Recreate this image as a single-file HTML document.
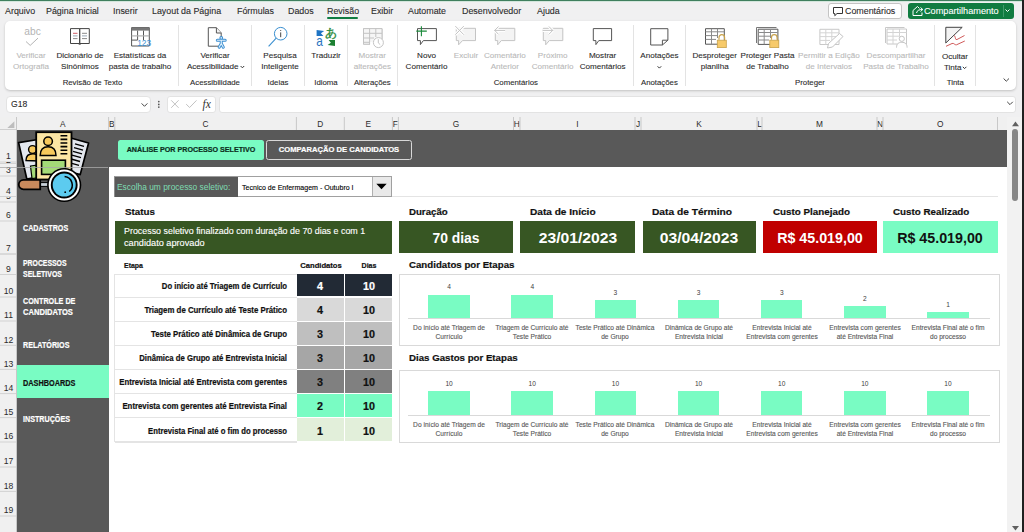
<!DOCTYPE html>
<html><head><meta charset="utf-8">
<style>
*{margin:0;padding:0;box-sizing:border-box}
html,body{width:1024px;height:532px;overflow:hidden;background:#f0f0f1;font-family:"Liberation Sans",sans-serif;color:#242424}
.a{position:absolute}
.t{position:absolute;white-space:nowrap;line-height:1}
</style></head><body>
<div class="a" style="left:0;top:0;width:1024px;height:1px;background:#3f7f5e"></div><div class="a" style="left:0;top:1px;width:1024px;height:1px;background:#d3e6dc"></div>

<div class="t" style="top:7px;font-size:8.90px;color:#2b2b2b;-webkit-text-stroke:0.1px #2b2b2b;left:5.00px;">Arquivo</div>
<div class="t" style="top:7px;font-size:8.90px;color:#2b2b2b;-webkit-text-stroke:0.1px #2b2b2b;left:46.00px;">Página Inicial</div>
<div class="t" style="top:7px;font-size:8.90px;color:#2b2b2b;-webkit-text-stroke:0.1px #2b2b2b;left:113.00px;">Inserir</div>
<div class="t" style="top:7px;font-size:8.90px;color:#2b2b2b;-webkit-text-stroke:0.1px #2b2b2b;left:152.00px;">Layout da Página</div>
<div class="t" style="top:7px;font-size:8.90px;color:#2b2b2b;-webkit-text-stroke:0.1px #2b2b2b;left:237.00px;">Fórmulas</div>
<div class="t" style="top:7px;font-size:8.90px;color:#2b2b2b;-webkit-text-stroke:0.1px #2b2b2b;left:288.00px;">Dados</div>
<div class="t" style="top:7px;font-size:8.90px;color:#2b2b2b;-webkit-text-stroke:0.1px #2b2b2b;left:327.00px;">Revisão</div>
<div class="t" style="top:7px;font-size:8.90px;color:#2b2b2b;-webkit-text-stroke:0.1px #2b2b2b;left:371.00px;">Exibir</div>
<div class="t" style="top:7px;font-size:8.90px;color:#2b2b2b;-webkit-text-stroke:0.1px #2b2b2b;left:408.00px;">Automate</div>
<div class="t" style="top:7px;font-size:8.90px;color:#2b2b2b;-webkit-text-stroke:0.1px #2b2b2b;left:462.00px;">Desenvolvedor</div>
<div class="t" style="top:7px;font-size:8.90px;color:#2b2b2b;-webkit-text-stroke:0.1px #2b2b2b;left:537.00px;">Ajuda</div>
<div class="a" style="left:327px;top:17px;width:31px;height:2px;background:#107c41;border-radius:1px"></div>
<div class="a" style="left:828px;top:3px;width:74px;height:16px;background:#fff;border:1px solid #c4c4c4;border-radius:3px"></div>
<svg class="a" style="left:832px;top:6px" width="12" height="11"><path d="M1.5 1.5H10.5V7.5H5L2.8 9.7V7.5H1.5Z" fill="none" stroke="#333" stroke-width="1"/></svg>
<div class="t" style="top:7px;font-size:8.90px;color:#2b2b2b;-webkit-text-stroke:0.1px #2b2b2b;left:845.00px;">Comentários</div>
<div class="a" style="left:907.5px;top:3px;width:106px;height:16px;background:#107c41;border-radius:3px"></div>
<svg class="a" style="left:911px;top:5px" width="14" height="12"><path d="M2 5.5V10.5H11V7.5M2 5.5L6.5 1.5L8.5 3.5M5.5 8C6 5.5 8 4.5 11.5 4.5M9.5 2.5L11.8 4.5L9.5 6.5" fill="none" stroke="#fff" stroke-width="1"/></svg>
<div class="t" style="top:7px;font-size:8.90px;color:#fff;-webkit-text-stroke:0.1px #fff;left:923.60px;transform:scaleX(1.030);transform-origin:0 0;">Compartilhamento</div>
<div class="a" style="left:1002.5px;top:5px;width:1px;height:12px;background:#3f9a6a"></div>
<svg class="a" style="left:1004px;top:8px" width="8" height="6"><path d="M1.5 1.5L3.5 3.5L5.5 1.5" fill="none" stroke="#fff" stroke-width="1"/></svg>
<div class="a" style="left:5px;top:21px;width:1011px;height:68.6px;background:#fff;border-radius:5px;box-shadow:0 1px 2.5px rgba(0,0,0,.2)"></div>
<!-- RIBBON ICONS -->
<svg class="a" style="left:0;top:0;z-index:2" width="1024" height="115" viewBox="0 0 1024 115" fill="none" stroke-linecap="butt">
 <!-- separators -->
 <g stroke="#e3e3e3" stroke-width="1">
  <path d="M178.5 25V86M251.5 25V86M304.5 25V86M347.5 25V86M397.5 25V86M633.5 25V86M685.5 25V86M934.5 25V86M975.5 25V86"/>
 </g>
 <!-- abc check -->
 <text x="24.3" y="35.3" font-family="Liberation Sans" font-size="10.2" fill="#b4b4b4" stroke="none">abc</text>
 <path d="M26 41.5L30.2 45.4L38 38.1" stroke="#b4b4b4" stroke-width="1"/>
 <!-- book -->
 <path d="M70.5 28.6H79.7V43.5H70.5Z M79.7 28.6H89.3V43.5H79.7Z" stroke="#444" stroke-width="1" fill="#fff"/>
 <path d="M78.7 43.5H80.7V44.7H78.7Z" fill="#444"/>
 <path d="M73 33.3H77.5" stroke="#d0606a" stroke-width="1"/>
 <path d="M73 35.9H77.5M82 35.9H87" stroke="#9aa6b4" stroke-width="1"/>
 <path d="M73 38.6H77.5M82 33.3H87M82 38.6H87" stroke="#8a8a8a" stroke-width="1"/>
 <!-- table 123 -->
 <path d="M131.6 27.6H149.3V46H131.6Z" stroke="#555" stroke-width="1" fill="#fff"/>
 <path d="M131.6 27.6H149.3V30.6H131.6Z" fill="#777"/>
 <path d="M137.6 30.6V40M143.5 30.6V40M131.6 40.1H137.6" stroke="#555" stroke-width="1"/>
 <path d="M131.6 35.9H149.3" stroke="#b0b0b0" stroke-width="1.2"/>
 <text x="137.2" y="46.2" font-family="Liberation Sans" font-size="8.4" fill="#3a8fd0" stroke="none">123</text>
 <!-- accessibility doc -->
 <path d="M208.3 27.7H216.4L221.2 32.9V46.2H208.3Z" stroke="#555" stroke-width="1" fill="#fff"/>
 <path d="M216.4 27.7V33H221.2" stroke="#555" stroke-width="1" fill="#f4f4f4"/>
 <g stroke-linecap="round" stroke-linejoin="round">
 <path d="M217.3 40.2L225.2 40.2M221.25 40.2V43.8M221.25 43.5L219.2 47.2M221.25 43.5L223.3 47.2" stroke="#3d8fd1" stroke-width="3"/>
 <circle cx="221.25" cy="37.9" r="1.9" fill="#3d8fd1"/>
 <path d="M217.3 40.2L225.2 40.2M221.25 40.2V43.8M221.25 43.5L219.2 47.2M221.25 43.5L223.3 47.2" stroke="#dff0fb" stroke-width="1.1"/>
 <circle cx="221.25" cy="37.9" r=".8" fill="#dff0fb"/>
 </g>
 <!-- search -->
 <circle cx="280.7" cy="33.7" r="6.3" stroke="#3a8fd0" stroke-width="1"/>
 <path d="M276.2 38.2L268.6 46.3" stroke="#3a8fd0" stroke-width="1.1"/>
 <path d="M280.7 32.4V37.2" stroke="#444" stroke-width="1"/>
 <circle cx="280.7" cy="30.5" r=".6" fill="#444" stroke="none"/>
 <!-- translate -->
 <path d="M316.6 30L324.2 30.9L320.9 33.2L323.4 35.9L316.6 36.1Z" fill="#1f74c4"/>
 <text x="0" y="0" transform="translate(316.2 46.2) scale(0.8 1)" font-family="Liberation Sans" font-size="14.8" fill="#2a74c0" stroke="none">a</text>
 <text x="325.2" y="37.2" font-family="Liberation Sans" font-size="11.8" fill="#2a8a3a" stroke="#2a8a3a" stroke-width=".35">あ</text>
 <path d="M335 46.1L327.6 45L330.9 42.8L328.6 40.1L335 40Z" fill="#1d8032"/>
 <!-- mostrar alteracoes gray -->
 <path d="M363.5 28.6H382V39.5M363.5 28.6V44.2H370" stroke="#c4c4c4" stroke-width="1" fill="none"/>
 <path d="M363.5 28.6H382V42H370V44.2H363.5Z" fill="#f6f6f6" stroke="none"/>
 <path d="M363.5 28.6H382V39M363.5 28.6V44.2H370M363.5 33.3H382M363.5 38H374M363.5 42.3H370M369.6 28.6V44.2M375.8 28.6V37" stroke="#c4c4c4" stroke-width="1" fill="none"/>
 <circle cx="378.4" cy="42.6" r="5" stroke="#c4c4c4" stroke-width="1" fill="#fff"/>
 <path d="M378.3 39.2V42.9L380.2 44.6" stroke="#c4c4c4" stroke-width="1" fill="none"/>
 <!-- novo comentario -->
 <path d="M417.5 28.6H436.4V40.6H423.3L420.4 44.6V40.6H417.5Z" stroke="#555" stroke-width="1" fill="#fff"/>
 <path d="M421.4 26.2V36.3M416.3 31.1H426.8" stroke="#1a8a3a" stroke-width="1.1"/>
 <!-- excluir gray -->
 <path d="M456.3 28.3H475.5V40.6H462.5L458.6 44.8V40.6H456.3Z" stroke="#c4c4c4" stroke-width="1" fill="#f4f4f4"/>
 <path d="M455.3 26.1L463.8 34.7M463.8 26.1L455.3 34.7" stroke="#fff" stroke-width="3"/>
 <path d="M455.3 26.1L463.8 34.7M463.8 26.1L455.3 34.7" stroke="#c4c4c4" stroke-width="1"/>
 <!-- anterior gray -->
 <path d="M495.3 28.3H514.8V40.6H501.3L497.7 44.8V40.6H495.3Z" stroke="#c4c4c4" stroke-width="1" fill="#f4f4f4"/>
 <path d="M494.5 30.4H505.1M494.7 30.4L498.5 26.5M494.7 30.4L498.5 34.3" stroke="#fff" stroke-width="3"/>
 <path d="M494.5 30.4H505.1M494.7 30.4L498.5 26.5M494.7 30.4L498.5 34.3" stroke="#c4c4c4" stroke-width="1" fill="none"/>
 <!-- proximo gray -->
 <path d="M543.3 28.3H562.8V40.6H549.3L545.7 44.8V40.6H543.3Z" stroke="#c4c4c4" stroke-width="1" fill="#f4f4f4"/>
 <path d="M542.6 30.4H552.9M552.7 30.4L548.9 26.5M552.7 30.4L548.9 34.3" stroke="#fff" stroke-width="3"/>
 <path d="M542.6 30.4H552.9M552.7 30.4L548.9 26.5M552.7 30.4L548.9 34.3" stroke="#c4c4c4" stroke-width="1" fill="none"/>
 <!-- mostrar comentarios -->
 <path d="M593.3 28.6H611.6V40.6H598.8L595.9 44.6V40.6H593.3Z" stroke="#555" stroke-width="1" fill="#fff"/>
 <!-- anotacoes -->
 <path d="M650.7 28.7H667.9V40.2L662.4 45H650.7Z" stroke="#555" stroke-width="1" fill="#fff"/>
 <path d="M667.9 40.2H662.4V45" stroke="#555" stroke-width="1" fill="none"/>
 <!-- desproteger -->
 <path d="M705.5 28.7H724.3V44.2H705.5Z" stroke="#555" stroke-width="1" fill="#fff"/>
 <path d="M705.5 31.8H724.3M705.5 35.6H718M705.5 39.4H716M711.5 28.7V44.2M717.5 28.7V38" stroke="#8a8a8a" stroke-width="1"/>
 <path d="M719 39.8V37.5A2.8 2.8 0 0 1 724.6 37.5V39.8" stroke="#c9a24a" stroke-width="1.2"/>
 <rect x="717.3" y="40.2" width="9" height="7.4" fill="#f7ca6a" stroke="#c9a24a" stroke-width=".8"/>
 <!-- proteger pasta -->
 <path d="M756.5 27.5H776.5M756.5 27.5V43" stroke="#777" stroke-width="1"/>
 <path d="M758.2 29.2H777.9V44.4H758.2Z" stroke="#555" stroke-width="1" fill="#fff"/>
 <path d="M758.2 32.5H777.9M758.2 36.2H771M758.2 40H769M764.2 29.2V44.4M770.5 29.2V38" stroke="#8a8a8a" stroke-width="1"/>
 <path d="M771.5 39.8V37.5A2.8 2.8 0 0 1 777.1 37.5V39.8" stroke="#c9a24a" stroke-width="1.2"/>
 <rect x="769.8" y="40.2" width="9" height="7.4" fill="#f7ca6a" stroke="#c9a24a" stroke-width=".8"/>
 <!-- permitir gray -->
 <path d="M819.9 29.3H839V44.5H819.9Z" stroke="#c8c8c8" stroke-width="1" fill="#fff"/>
 <path d="M819.9 32.8H839M819.9 36.6H836M819.9 40.4H830M825.8 29.3V44.5M831.8 29.3V40" stroke="#d4d4d4" stroke-width="1"/>
 <path d="M839.5 33.5L843 36.5L832.5 47L827.5 48L828.5 43.5Z" stroke="#c4c4c4" stroke-width="1" fill="#fff"/>
 <!-- descompartilhar gray -->
 <path d="M885.5 27.5H904.5M885.5 27.5V43" stroke="#c8c8c8" stroke-width="1"/>
 <path d="M887 29H906.5V44H887Z" stroke="#c8c8c8" stroke-width="1" fill="#fff"/>
 <path d="M887 32.5H906.5M887 36.2H900M887 40H897M893 29V44M899.5 29V36" stroke="#d4d4d4" stroke-width="1"/>
 <circle cx="901.8" cy="38.8" r="2.6" stroke="#c4c4c4" stroke-width="1" fill="#fff"/>
 <path d="M896.5 47.6C896.5 43.8 898.6 42.3 901.8 42.3C905 42.3 907.1 43.8 907.1 47.6" stroke="#c4c4c4" stroke-width="1" fill="#fff"/>
 <!-- tinta -->
 <path d="M945.8 27.3H962.2L945.8 43Z" stroke="#444" stroke-width="1" fill="#f3f3f3"/>
 <path d="M954.5 35.5C956 38.5 955 40 957 39.5L964.5 35.5" stroke="#d05a5a" stroke-width="1"/>
 <path d="M946 46.3L952 43.5C954 42.6 954.5 45.3 956.5 44.8L964.8 41" stroke="#d05a5a" stroke-width="1"/>
 <!-- chevrons -->
 <path d="M1003.6 78.5L1006.3 81.2L1009 78.5" stroke="#444" stroke-width="1"/>
 <path d="M1007.2 101.8L1010 104.6L1012.8 101.8" stroke="#444" stroke-width="1"/>
 <path d="M141.6 103.4L144.5 106.3L147.4 103.4" stroke="#444" stroke-width="1"/>
</svg>
<div class="t" style="top:52px;font-size:8.10px;color:#b9b9b9;-webkit-text-stroke:0.1px #b9b9b9;left:-19.00px;width:100px;text-align:center;">Verificar</div>
<div class="t" style="top:63px;font-size:8.10px;color:#b9b9b9;-webkit-text-stroke:0.1px #b9b9b9;left:-19.00px;width:100px;text-align:center;">Ortografia</div>
<div class="t" style="top:52px;font-size:8.10px;color:#2b2b2b;-webkit-text-stroke:0.1px #2b2b2b;left:30.00px;width:100px;text-align:center;">Dicionário de</div>
<div class="t" style="top:63px;font-size:8.10px;color:#2b2b2b;-webkit-text-stroke:0.1px #2b2b2b;left:30.00px;width:100px;text-align:center;">Sinônimos</div>
<div class="t" style="top:52px;font-size:8.10px;color:#2b2b2b;-webkit-text-stroke:0.1px #2b2b2b;left:90.00px;width:100px;text-align:center;">Estatísticas da</div>
<div class="t" style="top:63px;font-size:8.10px;color:#2b2b2b;-webkit-text-stroke:0.1px #2b2b2b;left:90.00px;width:100px;text-align:center;">pasta de trabalho</div>
<div class="t" style="top:52px;font-size:8.10px;color:#2b2b2b;-webkit-text-stroke:0.1px #2b2b2b;left:165.00px;width:100px;text-align:center;">Verificar</div>
<div class="t" style="top:63px;font-size:8.10px;color:#2b2b2b;-webkit-text-stroke:0.1px #2b2b2b;left:165.00px;width:100px;text-align:center;">Acessibilidade&nbsp;&nbsp;</div>
<div class="t" style="top:52px;font-size:8.10px;color:#2b2b2b;-webkit-text-stroke:0.1px #2b2b2b;left:230.00px;width:100px;text-align:center;">Pesquisa</div>
<div class="t" style="top:63px;font-size:8.10px;color:#2b2b2b;-webkit-text-stroke:0.1px #2b2b2b;left:230.00px;width:100px;text-align:center;">Inteligente</div>
<div class="t" style="top:52px;font-size:8.10px;color:#2b2b2b;-webkit-text-stroke:0.1px #2b2b2b;left:276.00px;width:100px;text-align:center;">Traduzir</div>
<div class="t" style="top:52px;font-size:8.10px;color:#b9b9b9;-webkit-text-stroke:0.1px #b9b9b9;left:322.30px;width:100px;text-align:center;">Mostrar</div>
<div class="t" style="top:63px;font-size:8.10px;color:#b9b9b9;-webkit-text-stroke:0.1px #b9b9b9;left:322.30px;width:100px;text-align:center;">alterações</div>
<div class="t" style="top:52px;font-size:8.10px;color:#2b2b2b;-webkit-text-stroke:0.1px #2b2b2b;left:376.50px;width:100px;text-align:center;">Novo</div>
<div class="t" style="top:63px;font-size:8.10px;color:#2b2b2b;-webkit-text-stroke:0.1px #2b2b2b;left:376.50px;width:100px;text-align:center;">Comentário</div>
<div class="t" style="top:52px;font-size:8.10px;color:#b9b9b9;-webkit-text-stroke:0.1px #b9b9b9;left:416.00px;width:100px;text-align:center;">Excluir</div>
<div class="t" style="top:52px;font-size:8.10px;color:#b9b9b9;-webkit-text-stroke:0.1px #b9b9b9;left:454.80px;width:100px;text-align:center;">Comentário</div>
<div class="t" style="top:63px;font-size:8.10px;color:#b9b9b9;-webkit-text-stroke:0.1px #b9b9b9;left:454.80px;width:100px;text-align:center;">Anterior</div>
<div class="t" style="top:52px;font-size:8.10px;color:#b9b9b9;-webkit-text-stroke:0.1px #b9b9b9;left:502.70px;width:100px;text-align:center;">Próximo</div>
<div class="t" style="top:63px;font-size:8.10px;color:#b9b9b9;-webkit-text-stroke:0.1px #b9b9b9;left:502.70px;width:100px;text-align:center;">Comentário</div>
<div class="t" style="top:52px;font-size:8.10px;color:#2b2b2b;-webkit-text-stroke:0.1px #2b2b2b;left:552.60px;width:100px;text-align:center;">Mostrar</div>
<div class="t" style="top:63px;font-size:8.10px;color:#2b2b2b;-webkit-text-stroke:0.1px #2b2b2b;left:552.60px;width:100px;text-align:center;">Comentários</div>
<div class="t" style="top:52px;font-size:8.10px;color:#2b2b2b;-webkit-text-stroke:0.1px #2b2b2b;left:609.40px;width:100px;text-align:center;">Anotações</div>
<div class="t" style="top:52px;font-size:8.10px;color:#2b2b2b;-webkit-text-stroke:0.1px #2b2b2b;left:664.70px;width:100px;text-align:center;">Desproteger</div>
<div class="t" style="top:63px;font-size:8.10px;color:#2b2b2b;-webkit-text-stroke:0.1px #2b2b2b;left:664.70px;width:100px;text-align:center;">planilha</div>
<div class="t" style="top:52px;font-size:8.10px;color:#2b2b2b;-webkit-text-stroke:0.1px #2b2b2b;left:717.50px;width:100px;text-align:center;">Proteger Pasta</div>
<div class="t" style="top:63px;font-size:8.10px;color:#2b2b2b;-webkit-text-stroke:0.1px #2b2b2b;left:717.50px;width:100px;text-align:center;">de Trabalho</div>
<div class="t" style="top:52px;font-size:8.10px;color:#b9b9b9;-webkit-text-stroke:0.1px #b9b9b9;left:778.90px;width:100px;text-align:center;">Permitir a Edição</div>
<div class="t" style="top:63px;font-size:8.10px;color:#b9b9b9;-webkit-text-stroke:0.1px #b9b9b9;left:778.90px;width:100px;text-align:center;">de Intervalos</div>
<div class="t" style="top:52px;font-size:8.10px;color:#b9b9b9;-webkit-text-stroke:0.1px #b9b9b9;left:846.00px;width:100px;text-align:center;">Descompartilhar</div>
<div class="t" style="top:63px;font-size:8.10px;color:#b9b9b9;-webkit-text-stroke:0.1px #b9b9b9;left:846.00px;width:100px;text-align:center;">Pasta de Trabalho</div>
<div class="t" style="top:53px;font-size:8.10px;color:#2b2b2b;-webkit-text-stroke:0.1px #2b2b2b;left:905.00px;width:100px;text-align:center;">Ocultar</div>
<div class="t" style="top:64px;font-size:8.10px;color:#2b2b2b;-webkit-text-stroke:0.1px #2b2b2b;left:905.00px;width:100px;text-align:center;">Tinta&nbsp;&nbsp;</div>
<svg class="a" style="left:0;top:0;z-index:2" width="1024" height="90"><path d="M240.6 66L242.4 67.8L244.2 66M657.6 66.3L659.4 68.1L661.2 66.3M962.8 66.8L964.6 68.6L966.4 66.8" fill="none" stroke="#333" stroke-width="1"/></svg>
<div class="t" style="top:79px;font-size:7.80px;color:#2b2b2b;-webkit-text-stroke:0.1px #2b2b2b;left:42.50px;width:100px;text-align:center;">Revisão de Texto</div>
<div class="t" style="top:79px;font-size:7.80px;color:#2b2b2b;-webkit-text-stroke:0.1px #2b2b2b;left:165.00px;width:100px;text-align:center;">Acessibilidade</div>
<div class="t" style="top:79px;font-size:7.80px;color:#2b2b2b;-webkit-text-stroke:0.1px #2b2b2b;left:228.00px;width:100px;text-align:center;">Ideias</div>
<div class="t" style="top:79px;font-size:7.80px;color:#2b2b2b;-webkit-text-stroke:0.1px #2b2b2b;left:276.00px;width:100px;text-align:center;">Idioma</div>
<div class="t" style="top:79px;font-size:7.80px;color:#2b2b2b;-webkit-text-stroke:0.1px #2b2b2b;left:322.30px;width:100px;text-align:center;">Alterações</div>
<div class="t" style="top:79px;font-size:7.80px;color:#2b2b2b;-webkit-text-stroke:0.1px #2b2b2b;left:465.80px;width:100px;text-align:center;">Comentários</div>
<div class="t" style="top:79px;font-size:7.80px;color:#2b2b2b;-webkit-text-stroke:0.1px #2b2b2b;left:609.40px;width:100px;text-align:center;">Anotações</div>
<div class="t" style="top:79px;font-size:7.80px;color:#2b2b2b;-webkit-text-stroke:0.1px #2b2b2b;left:760.00px;width:100px;text-align:center;">Proteger</div>
<div class="t" style="top:79px;font-size:7.80px;color:#2b2b2b;-webkit-text-stroke:0.1px #2b2b2b;left:905.30px;width:100px;text-align:center;">Tinta</div>
<div class="a" style="left:5.5px;top:95.5px;width:145.5px;height:17px;background:#fff;border:1px solid #e3e3e3;border-radius:4px"></div>
<div class="t" style="top:100px;font-size:8.60px;color:#2b2b2b;-webkit-text-stroke:0.1px #2b2b2b;left:11.00px;">G18</div>
<div class="a" style="left:167px;top:96px;width:49px;height:16.5px;background:#fff;border:1px solid #e3e3e3;border-radius:3px"></div>
<div class="a" style="left:219px;top:96px;width:797px;height:16.5px;background:#fff;border:1px solid #e3e3e3;border-radius:3px"></div>
<svg class="a" style="left:0;top:90px;z-index:3" width="240" height="25" viewBox="0 90 240 25" fill="none">
 <circle cx="158.8" cy="101.6" r=".85" fill="#555"/><circle cx="158.8" cy="104.4" r=".85" fill="#555"/><circle cx="158.8" cy="107.1" r=".85" fill="#555"/>
 <path d="M171.2 100.3L178.6 107.8M178.6 100.3L171.2 107.8" stroke="#c2c2c2" stroke-width="1"/>
 <path d="M186.2 104.2L189.6 107.5L196.5 100.4" stroke="#c2c2c2" stroke-width="1"/>
 <text x="202.6" y="107.6" font-family="Liberation Serif" font-style="italic" font-size="11.5" fill="#333">fx</text>
</svg>

<div class="a" style="left:0;top:117px;width:1008px;height:13px;background:#f0f0f0"></div>
<div class="t" style="top:120px;font-size:8.30px;color:#2b2b2b;left:42.80px;width:40px;text-align:center;">A</div>
<div class="t" style="top:120px;font-size:8.30px;color:#2b2b2b;left:91.70px;width:40px;text-align:center;">B</div>
<div class="t" style="top:120px;font-size:8.30px;color:#2b2b2b;left:185.60px;width:40px;text-align:center;">C</div>
<div class="t" style="top:120px;font-size:8.30px;color:#2b2b2b;left:300.35px;width:40px;text-align:center;">D</div>
<div class="t" style="top:120px;font-size:8.30px;color:#2b2b2b;left:348.35px;width:40px;text-align:center;">E</div>
<div class="t" style="top:120px;font-size:8.30px;color:#2b2b2b;left:375.40px;width:40px;text-align:center;">F</div>
<div class="t" style="top:120px;font-size:8.30px;color:#2b2b2b;left:435.95px;width:40px;text-align:center;">G</div>
<div class="t" style="top:120px;font-size:8.30px;color:#2b2b2b;left:496.75px;width:40px;text-align:center;">H</div>
<div class="t" style="top:120px;font-size:8.30px;color:#2b2b2b;left:557.50px;width:40px;text-align:center;">I</div>
<div class="t" style="top:120px;font-size:8.30px;color:#2b2b2b;left:618.00px;width:40px;text-align:center;">J</div>
<div class="t" style="top:120px;font-size:8.30px;color:#2b2b2b;left:679.00px;width:40px;text-align:center;">K</div>
<div class="t" style="top:120px;font-size:8.30px;color:#2b2b2b;left:739.50px;width:40px;text-align:center;">L</div>
<div class="t" style="top:120px;font-size:8.30px;color:#2b2b2b;left:799.50px;width:40px;text-align:center;">M</div>
<div class="t" style="top:120px;font-size:8.30px;color:#2b2b2b;left:860.00px;width:40px;text-align:center;">N</div>
<div class="t" style="top:120px;font-size:8.30px;color:#2b2b2b;left:920.25px;width:40px;text-align:center;">O</div>
<svg class="a" style="left:0;top:117px" width="1008" height="13"><path d="M108.6 0V13M114.8 0V13M296.4 0V13M344.3 0V13M392.4 0V13M398.4 0V13M513.5 0V13M520.0 0V13M635.0 0V13M641.0 0V13M757.0 0V13M762.0 0V13M877.0 0V13M883.0 0V13M997.5 0V13" stroke="#c8c8c8" stroke-width="1"/><path d="M7.3 11L14.4 4.2V11Z" fill="#bdbdbd"/><path d="M0 12.5H17" stroke="#cfcfcf"/></svg>
<div class="a" style="left:0;top:130px;width:17px;height:402px;background:#f0f0f0"></div>
<div class="t" style="top:152px;font-size:8.60px;color:#2b2b2b;left:-1.50px;width:20px;text-align:center;">1</div>
<div class="t" style="top:166px;font-size:8.60px;color:#2b2b2b;left:-1.50px;width:20px;text-align:center;">3</div>
<div class="t" style="top:187px;font-size:8.60px;color:#2b2b2b;left:-1.50px;width:20px;text-align:center;">4</div>
<div class="t" style="top:211px;font-size:8.60px;color:#2b2b2b;left:-1.50px;width:20px;text-align:center;">6</div>
<div class="t" style="top:244px;font-size:8.60px;color:#2b2b2b;left:-1.50px;width:20px;text-align:center;">7</div>
<div class="t" style="top:265px;font-size:8.60px;color:#2b2b2b;left:-1.50px;width:20px;text-align:center;">9</div>
<div class="t" style="top:287px;font-size:8.60px;color:#2b2b2b;left:-1.50px;width:20px;text-align:center;">10</div>
<div class="t" style="top:311px;font-size:8.60px;color:#2b2b2b;left:-1.50px;width:20px;text-align:center;">11</div>
<div class="t" style="top:336px;font-size:8.60px;color:#2b2b2b;left:-1.50px;width:20px;text-align:center;">12</div>
<div class="t" style="top:360px;font-size:8.60px;color:#2b2b2b;left:-1.50px;width:20px;text-align:center;">13</div>
<div class="t" style="top:384px;font-size:8.60px;color:#2b2b2b;left:-1.50px;width:20px;text-align:center;">14</div>
<div class="t" style="top:408px;font-size:8.60px;color:#2b2b2b;left:-1.50px;width:20px;text-align:center;">15</div>
<div class="t" style="top:432px;font-size:8.60px;color:#2b2b2b;left:-1.50px;width:20px;text-align:center;">16</div>
<div class="t" style="top:457px;font-size:8.60px;color:#2b2b2b;left:-1.50px;width:20px;text-align:center;">17</div>
<div class="t" style="top:482px;font-size:8.60px;color:#2b2b2b;left:-1.50px;width:20px;text-align:center;">18</div>
<div class="t" style="top:506px;font-size:8.60px;color:#2b2b2b;left:-1.50px;width:20px;text-align:center;">19</div>
<svg class="a" style="left:0;top:0" width="18" height="532"><path d="M0 162.0H17M0 163.5H17M0 176.0H17M0 196.5H17M0 202.0H17M0 221.0H17M0 254.0H17M0 274.5H17M0 297.0H17M0 321.0H17M0 345.3H17M0 369.4H17M0 393.6H17M0 417.6H17M0 442.0H17M0 467.0H17M0 491.4H17M0 516.0H17M0 254H17" stroke="#d2d2d2" stroke-width="1"/><path d="M16.5 117V532" stroke="#c8c8c8"/></svg>
<div class="a" style="left:0;top:162px;width:17px;height:2px;overflow:hidden"><div class="t" style="top:-6px;font-size:8.60px;color:#2b2b2b;left:-1.50px;width:20px;text-align:center;">2</div></div>
<div class="a" style="left:0;top:196.5px;width:17px;height:5.5px;overflow:hidden"><div class="t" style="top:-5px;font-size:8.60px;color:#2b2b2b;left:-1.50px;width:20px;text-align:center;">5</div></div>
<div class="a" style="left:17px;top:130px;width:991px;height:402px;background:#fff"></div>
<div class="a" style="left:17px;top:130px;width:91.7px;height:402px;background:#595959"></div>
<div class="a" style="left:17px;top:130px;width:990px;height:37.3px;background:#595959"></div>
<div class="a" style="left:118px;top:140px;width:146.4px;height:19.6px;background:#79fcc3;border-radius:2.5px"></div>
<div class="t" style="top:146px;font-size:7.54px;color:#0b2e1c;font-weight:bold;-webkit-text-stroke:0.2px #0b2e1c;left:91.20px;width:200px;text-align:center;transform:scaleX(0.949);">ANÁLISE POR PROCESSO SELETIVO</div>
<div class="a" style="left:266px;top:140px;width:146px;height:19.6px;border:1px solid #d8d8d8;border-radius:2.5px"></div>
<div class="t" style="top:146px;font-size:7.54px;color:#fff;font-weight:bold;-webkit-text-stroke:0.2px #fff;left:239.00px;width:200px;text-align:center;transform:scaleX(1.009);">COMPARAÇÃO DE CANDIDATOS</div>
<div class="a" style="left:114px;top:176px;width:124.1px;height:20.6px;background:#595959;border-top:1px solid #9c9c9c;border-left:1px solid #8c8c8c"></div>
<div class="t" style="top:183px;font-size:8.80px;color:#7edcb2;left:116.60px;transform:scaleX(0.954);transform-origin:0 0;">Escolha um processo seletivo:</div>
<div class="a" style="left:238px;top:176px;width:154px;height:20.6px;background:#fff;border:1px solid #a0a0a0;border-left:none"></div>
<div class="t" style="top:184px;font-size:7.68px;color:#000;-webkit-text-stroke:0.12px #000;left:241.90px;transform:scaleX(0.918);transform-origin:0 0;">Tecnico de Enfermagem - Outubro I</div>
<div class="a" style="left:371.5px;top:177px;width:19.5px;height:18.6px;background:#e9e9e9;border-left:1px solid #b0b0b0"></div>
<svg class="a" style="left:372px;top:177px" width="20" height="19"><path d="M4.3 6.8H14.7L9.5 12.2Z" fill="#000"/></svg>
<div class="a" style="left:392px;top:196.3px;width:605.5px;height:1px;background:#e4e4e4"></div>
<div class="t" style="top:207px;font-size:9.64px;color:#111;font-weight:bold;-webkit-text-stroke:0.2px #111;left:125.00px;transform:scaleX(1.015);transform-origin:0 0;">Status</div>
<div class="a" style="left:114.7px;top:221.3px;width:277.3px;height:32.3px;background:#375623"></div>
<div class="t" style="top:227px;font-size:8.66px;color:#fff;-webkit-text-stroke:0.12px #fff;left:124.00px;transform:scaleX(1.027);transform-origin:0 0;">Processo seletivo finalizado com duração de 70 dias e com 1</div>
<div class="t" style="top:239px;font-size:8.66px;color:#fff;-webkit-text-stroke:0.12px #fff;left:124.00px;transform:scaleX(1.060);transform-origin:0 0;">candidato aprovado</div>
<div class="t" style="top:262px;font-size:7.68px;color:#111;font-weight:bold;-webkit-text-stroke:0.2px #111;left:124.40px;transform:scaleX(0.906);transform-origin:0 0;">Etapa</div>
<div class="t" style="top:262px;font-size:7.68px;color:#111;font-weight:bold;-webkit-text-stroke:0.2px #111;left:291.00px;width:60px;text-align:center;transform:scaleX(0.995);">Candidatos</div>
<div class="t" style="top:262px;font-size:7.68px;color:#111;font-weight:bold;-webkit-text-stroke:0.2px #111;left:349.00px;width:40px;text-align:center;transform:scaleX(0.922);">Dias</div>
<div class="a" style="left:114.2px;top:273.6px;width:183.3px;height:168.6px;border:1px solid #e4e4e4;border-right:none"></div>
<div class="a" style="left:114.7px;top:296.9px;width:182.3px;height:1px;background:#e4e4e4"></div>
<div class="t" style="top:283px;font-size:8.24px;color:#111;font-weight:bold;-webkit-text-stroke:0.2px #111;left:87.20px;width:200px;text-align:right;transform:scaleX(0.937);transform-origin:100% 0;">Do início até Triagem de Currículo</div>
<div class="a" style="left:297px;top:274.1px;width:46.8px;height:22.4px;background:#222a35"></div>
<div class="a" style="left:345px;top:274.1px;width:47px;height:22.4px;background:#222a35"></div>
<div class="t" style="top:282px;font-size:10.47px;color:#fff;font-weight:bold;-webkit-text-stroke:0.2px #fff;left:300.40px;width:40px;text-align:center;transform:scaleX(1.030);">4</div>
<div class="t" style="top:282px;font-size:10.47px;color:#fff;font-weight:bold;-webkit-text-stroke:0.2px #fff;left:349.00px;width:40px;text-align:center;transform:scaleX(1.030);">10</div>
<div class="a" style="left:114.7px;top:321.0px;width:182.3px;height:1px;background:#e4e4e4"></div>
<div class="t" style="top:307px;font-size:8.24px;color:#111;font-weight:bold;-webkit-text-stroke:0.2px #111;left:87.20px;width:200px;text-align:right;transform:scaleX(0.951);transform-origin:100% 0;">Triagem de Currículo até Teste Prático</div>
<div class="a" style="left:297px;top:297.7px;width:46.8px;height:22.9px;background:#d9d9d9"></div>
<div class="a" style="left:345px;top:297.7px;width:47px;height:22.9px;background:#d9d9d9"></div>
<div class="t" style="top:306px;font-size:10.47px;color:#111;font-weight:bold;-webkit-text-stroke:0.2px #111;left:300.40px;width:40px;text-align:center;transform:scaleX(1.030);">4</div>
<div class="t" style="top:306px;font-size:10.47px;color:#111;font-weight:bold;-webkit-text-stroke:0.2px #111;left:349.00px;width:40px;text-align:center;transform:scaleX(1.030);">10</div>
<div class="a" style="left:114.7px;top:345.0px;width:182.3px;height:1px;background:#e4e4e4"></div>
<div class="t" style="top:331px;font-size:8.24px;color:#111;font-weight:bold;-webkit-text-stroke:0.2px #111;left:87.20px;width:200px;text-align:right;transform:scaleX(0.950);transform-origin:100% 0;">Teste Prático até Dinâmica de Grupo</div>
<div class="a" style="left:297px;top:321.8px;width:46.8px;height:22.8px;background:#bfbfbf"></div>
<div class="a" style="left:345px;top:321.8px;width:47px;height:22.8px;background:#bfbfbf"></div>
<div class="t" style="top:330px;font-size:10.47px;color:#111;font-weight:bold;-webkit-text-stroke:0.2px #111;left:300.40px;width:40px;text-align:center;transform:scaleX(1.030);">3</div>
<div class="t" style="top:330px;font-size:10.47px;color:#111;font-weight:bold;-webkit-text-stroke:0.2px #111;left:349.00px;width:40px;text-align:center;transform:scaleX(1.030);">10</div>
<div class="a" style="left:114.7px;top:369.0px;width:182.3px;height:1px;background:#e4e4e4"></div>
<div class="t" style="top:355px;font-size:8.24px;color:#111;font-weight:bold;-webkit-text-stroke:0.2px #111;left:87.20px;width:200px;text-align:right;transform:scaleX(0.939);transform-origin:100% 0;">Dinâmica de Grupo até Entrevista Inicial</div>
<div class="a" style="left:297px;top:345.8px;width:46.8px;height:22.8px;background:#a6a6a6"></div>
<div class="a" style="left:345px;top:345.8px;width:47px;height:22.8px;background:#a6a6a6"></div>
<div class="t" style="top:354px;font-size:10.47px;color:#111;font-weight:bold;-webkit-text-stroke:0.2px #111;left:300.40px;width:40px;text-align:center;transform:scaleX(1.030);">3</div>
<div class="t" style="top:354px;font-size:10.47px;color:#111;font-weight:bold;-webkit-text-stroke:0.2px #111;left:349.00px;width:40px;text-align:center;transform:scaleX(1.030);">10</div>
<div class="a" style="left:114.7px;top:393.1px;width:182.3px;height:1px;background:#e4e4e4"></div>
<div class="t" style="top:379px;font-size:8.24px;color:#111;font-weight:bold;-webkit-text-stroke:0.2px #111;left:87.20px;width:200px;text-align:right;transform:scaleX(0.945);transform-origin:100% 0;">Entrevista Inicial até Entrevista com gerentes</div>
<div class="a" style="left:297px;top:369.8px;width:46.8px;height:22.9px;background:#808080"></div>
<div class="a" style="left:345px;top:369.8px;width:47px;height:22.9px;background:#808080"></div>
<div class="t" style="top:378px;font-size:10.47px;color:#111;font-weight:bold;-webkit-text-stroke:0.2px #111;left:300.40px;width:40px;text-align:center;transform:scaleX(1.030);">3</div>
<div class="t" style="top:378px;font-size:10.47px;color:#111;font-weight:bold;-webkit-text-stroke:0.2px #111;left:349.00px;width:40px;text-align:center;transform:scaleX(1.030);">10</div>
<div class="a" style="left:114.7px;top:417.1px;width:182.3px;height:1px;background:#e4e4e4"></div>
<div class="t" style="top:403px;font-size:8.24px;color:#111;font-weight:bold;-webkit-text-stroke:0.2px #111;left:87.20px;width:200px;text-align:right;transform:scaleX(0.949);transform-origin:100% 0;">Entrevista com gerentes até Entrevista Final</div>
<div class="a" style="left:297px;top:393.9px;width:46.8px;height:22.8px;background:#79fcc3"></div>
<div class="a" style="left:345px;top:393.9px;width:47px;height:22.8px;background:#79fcc3"></div>
<div class="t" style="top:402px;font-size:10.47px;color:#111;font-weight:bold;-webkit-text-stroke:0.2px #111;left:300.40px;width:40px;text-align:center;transform:scaleX(1.030);">2</div>
<div class="t" style="top:402px;font-size:10.47px;color:#111;font-weight:bold;-webkit-text-stroke:0.2px #111;left:349.00px;width:40px;text-align:center;transform:scaleX(1.030);">10</div>
<div class="a" style="left:114.7px;top:441.5px;width:182.3px;height:1px;background:#e4e4e4"></div>
<div class="t" style="top:428px;font-size:8.24px;color:#111;font-weight:bold;-webkit-text-stroke:0.2px #111;left:87.20px;width:200px;text-align:right;transform:scaleX(0.934);transform-origin:100% 0;">Entrevista Final até o fim do processo</div>
<div class="a" style="left:297px;top:417.9px;width:46.8px;height:23.2px;background:#e2efda"></div>
<div class="a" style="left:345px;top:417.9px;width:47px;height:23.2px;background:#e2efda"></div>
<div class="t" style="top:427px;font-size:10.47px;color:#111;font-weight:bold;-webkit-text-stroke:0.2px #111;left:300.40px;width:40px;text-align:center;transform:scaleX(1.030);">1</div>
<div class="t" style="top:427px;font-size:10.47px;color:#111;font-weight:bold;-webkit-text-stroke:0.2px #111;left:349.00px;width:40px;text-align:center;transform:scaleX(1.030);">10</div>
<div class="t" style="top:207px;font-size:9.78px;color:#111;font-weight:bold;-webkit-text-stroke:0.2px #111;left:409.00px;transform:scaleX(0.989);transform-origin:0 0;">Duração</div>
<div class="a" style="left:398.75px;top:221.3px;width:113.8px;height:32.2px;background:#375623"></div>
<div class="t" style="top:231px;font-size:14.66px;color:#fff;font-weight:bold;left:385.62px;width:140px;text-align:center;transform:scaleX(0.949);">70 dias</div>
<div class="t" style="top:207px;font-size:9.78px;color:#111;font-weight:bold;-webkit-text-stroke:0.2px #111;left:529.70px;transform:scaleX(1.033);transform-origin:0 0;">Data de Início</div>
<div class="a" style="left:519.7px;top:221.3px;width:115.6px;height:32.2px;background:#375623"></div>
<div class="t" style="top:231px;font-size:14.66px;color:#fff;font-weight:bold;left:507.50px;width:140px;text-align:center;transform:scaleX(1.072);">23/01/2023</div>
<div class="t" style="top:207px;font-size:9.78px;color:#111;font-weight:bold;-webkit-text-stroke:0.2px #111;left:652.00px;transform:scaleX(1.045);transform-origin:0 0;">Data de Término</div>
<div class="a" style="left:642.5px;top:221.3px;width:113.5px;height:32.2px;background:#375623"></div>
<div class="t" style="top:231px;font-size:14.66px;color:#fff;font-weight:bold;left:629.25px;width:140px;text-align:center;transform:scaleX(1.072);">03/04/2023</div>
<div class="t" style="top:207px;font-size:9.78px;color:#111;font-weight:bold;-webkit-text-stroke:0.2px #111;left:772.50px;transform:scaleX(1.006);transform-origin:0 0;">Custo Planejado</div>
<div class="a" style="left:763px;top:221.3px;width:113.6px;height:32.2px;background:#c00000"></div>
<div class="t" style="top:231px;font-size:14.66px;color:#fff;font-weight:bold;left:749.80px;width:140px;text-align:center;transform:scaleX(0.973);">R$ 45.019,00</div>
<div class="t" style="top:207px;font-size:9.78px;color:#111;font-weight:bold;-webkit-text-stroke:0.2px #111;left:893.00px;transform:scaleX(1.005);transform-origin:0 0;">Custo Realizado</div>
<div class="a" style="left:883px;top:221.3px;width:114.9px;height:32.2px;background:#79fcc3"></div>
<div class="t" style="top:231px;font-size:14.66px;color:#111;font-weight:bold;left:870.45px;width:140px;text-align:center;transform:scaleX(0.973);">R$ 45.019,00</div>
<div class="t" style="top:260px;font-size:9.92px;color:#111;font-weight:bold;-webkit-text-stroke:0.2px #111;left:408.90px;transform:scaleX(0.977);transform-origin:0 0;">Candidatos por Etapas</div>
<div class="a" style="left:398.5px;top:274.3px;width:601.3px;height:71.7px;border:1px solid #d9d9d9;background:#fff"></div>
<div class="a" style="left:407.5px;top:318.0px;width:582px;height:1px;background:#d9d9d9"></div>
<div class="a" style="left:428.3px;top:294.6px;width:41.6px;height:23.4px;background:#79fcc3"></div>
<div class="t" style="top:284px;font-size:6.60px;color:#404040;left:429.08px;width:40px;text-align:center;">4</div>
<div class="t" style="top:325px;font-size:6.70px;color:#595959;-webkit-text-stroke:0.12px #595959;left:399.08px;width:100px;text-align:center;transform:scaleX(0.990);">Do início até Triagem de</div>
<div class="t" style="top:334px;font-size:6.70px;color:#595959;-webkit-text-stroke:0.12px #595959;left:399.08px;width:100px;text-align:center;transform:scaleX(0.990);">Currículo</div>
<div class="a" style="left:511.4px;top:294.6px;width:41.6px;height:23.4px;background:#79fcc3"></div>
<div class="t" style="top:284px;font-size:6.60px;color:#404040;left:512.24px;width:40px;text-align:center;">4</div>
<div class="t" style="top:325px;font-size:6.70px;color:#595959;-webkit-text-stroke:0.12px #595959;left:482.24px;width:100px;text-align:center;transform:scaleX(0.990);">Triagem de Currículo até</div>
<div class="t" style="top:334px;font-size:6.70px;color:#595959;-webkit-text-stroke:0.12px #595959;left:482.24px;width:100px;text-align:center;transform:scaleX(0.990);">Teste Prático</div>
<div class="a" style="left:594.6px;top:300.4px;width:41.6px;height:17.5px;background:#79fcc3"></div>
<div class="t" style="top:290px;font-size:6.60px;color:#404040;left:595.40px;width:40px;text-align:center;">3</div>
<div class="t" style="top:325px;font-size:6.70px;color:#595959;-webkit-text-stroke:0.12px #595959;left:565.40px;width:100px;text-align:center;transform:scaleX(0.990);">Teste Prático até Dinâmica</div>
<div class="t" style="top:334px;font-size:6.70px;color:#595959;-webkit-text-stroke:0.12px #595959;left:565.40px;width:100px;text-align:center;transform:scaleX(0.990);">de Grupo</div>
<div class="a" style="left:677.8px;top:300.4px;width:41.6px;height:17.5px;background:#79fcc3"></div>
<div class="t" style="top:290px;font-size:6.60px;color:#404040;left:678.56px;width:40px;text-align:center;">3</div>
<div class="t" style="top:325px;font-size:6.70px;color:#595959;-webkit-text-stroke:0.12px #595959;left:648.56px;width:100px;text-align:center;transform:scaleX(0.990);">Dinâmica de Grupo até</div>
<div class="t" style="top:334px;font-size:6.70px;color:#595959;-webkit-text-stroke:0.12px #595959;left:648.56px;width:100px;text-align:center;transform:scaleX(0.990);">Entrevista Inicial</div>
<div class="a" style="left:760.9px;top:300.4px;width:41.6px;height:17.5px;background:#79fcc3"></div>
<div class="t" style="top:290px;font-size:6.60px;color:#404040;left:761.72px;width:40px;text-align:center;">3</div>
<div class="t" style="top:325px;font-size:6.70px;color:#595959;-webkit-text-stroke:0.12px #595959;left:731.72px;width:100px;text-align:center;transform:scaleX(0.990);">Entrevista Inicial até</div>
<div class="t" style="top:334px;font-size:6.70px;color:#595959;-webkit-text-stroke:0.12px #595959;left:731.72px;width:100px;text-align:center;transform:scaleX(0.990);">Entrevista com gerentes</div>
<div class="a" style="left:844.1px;top:306.3px;width:41.6px;height:11.7px;background:#79fcc3"></div>
<div class="t" style="top:296px;font-size:6.60px;color:#404040;left:844.88px;width:40px;text-align:center;">2</div>
<div class="t" style="top:325px;font-size:6.70px;color:#595959;-webkit-text-stroke:0.12px #595959;left:814.88px;width:100px;text-align:center;transform:scaleX(0.990);">Entrevista com gerentes</div>
<div class="t" style="top:334px;font-size:6.70px;color:#595959;-webkit-text-stroke:0.12px #595959;left:814.88px;width:100px;text-align:center;transform:scaleX(0.990);">até Entrevista Final</div>
<div class="a" style="left:927.2px;top:312.1px;width:41.6px;height:5.8px;background:#79fcc3"></div>
<div class="t" style="top:302px;font-size:6.60px;color:#404040;left:928.04px;width:40px;text-align:center;">1</div>
<div class="t" style="top:325px;font-size:6.70px;color:#595959;-webkit-text-stroke:0.12px #595959;left:898.04px;width:100px;text-align:center;transform:scaleX(0.990);">Entrevista Final até o fim</div>
<div class="t" style="top:334px;font-size:6.70px;color:#595959;-webkit-text-stroke:0.12px #595959;left:898.04px;width:100px;text-align:center;transform:scaleX(0.990);">do processo</div>
<div class="t" style="top:353px;font-size:9.92px;color:#111;font-weight:bold;-webkit-text-stroke:0.2px #111;left:408.90px;transform:scaleX(0.977);transform-origin:0 0;">Dias Gastos por Etapas</div>
<div class="a" style="left:398.5px;top:369.7px;width:601.3px;height:72.9px;border:1px solid #d9d9d9;background:#fff"></div>
<div class="a" style="left:407.5px;top:414.6px;width:582px;height:1px;background:#d9d9d9"></div>
<div class="a" style="left:428.3px;top:390.8px;width:41.6px;height:23.8px;background:#79fcc3"></div>
<div class="t" style="top:381px;font-size:6.60px;color:#404040;left:429.08px;width:40px;text-align:center;">10</div>
<div class="t" style="top:422px;font-size:6.70px;color:#595959;-webkit-text-stroke:0.12px #595959;left:399.08px;width:100px;text-align:center;transform:scaleX(0.990);">Do início até Triagem de</div>
<div class="t" style="top:431px;font-size:6.70px;color:#595959;-webkit-text-stroke:0.12px #595959;left:399.08px;width:100px;text-align:center;transform:scaleX(0.990);">Currículo</div>
<div class="a" style="left:511.4px;top:390.8px;width:41.6px;height:23.8px;background:#79fcc3"></div>
<div class="t" style="top:381px;font-size:6.60px;color:#404040;left:512.24px;width:40px;text-align:center;">10</div>
<div class="t" style="top:422px;font-size:6.70px;color:#595959;-webkit-text-stroke:0.12px #595959;left:482.24px;width:100px;text-align:center;transform:scaleX(0.990);">Triagem de Currículo até</div>
<div class="t" style="top:431px;font-size:6.70px;color:#595959;-webkit-text-stroke:0.12px #595959;left:482.24px;width:100px;text-align:center;transform:scaleX(0.990);">Teste Prático</div>
<div class="a" style="left:594.6px;top:390.8px;width:41.6px;height:23.8px;background:#79fcc3"></div>
<div class="t" style="top:381px;font-size:6.60px;color:#404040;left:595.40px;width:40px;text-align:center;">10</div>
<div class="t" style="top:422px;font-size:6.70px;color:#595959;-webkit-text-stroke:0.12px #595959;left:565.40px;width:100px;text-align:center;transform:scaleX(0.990);">Teste Prático até Dinâmica</div>
<div class="t" style="top:431px;font-size:6.70px;color:#595959;-webkit-text-stroke:0.12px #595959;left:565.40px;width:100px;text-align:center;transform:scaleX(0.990);">de Grupo</div>
<div class="a" style="left:677.8px;top:390.8px;width:41.6px;height:23.8px;background:#79fcc3"></div>
<div class="t" style="top:381px;font-size:6.60px;color:#404040;left:678.56px;width:40px;text-align:center;">10</div>
<div class="t" style="top:422px;font-size:6.70px;color:#595959;-webkit-text-stroke:0.12px #595959;left:648.56px;width:100px;text-align:center;transform:scaleX(0.990);">Dinâmica de Grupo até</div>
<div class="t" style="top:431px;font-size:6.70px;color:#595959;-webkit-text-stroke:0.12px #595959;left:648.56px;width:100px;text-align:center;transform:scaleX(0.990);">Entrevista Inicial</div>
<div class="a" style="left:760.9px;top:390.8px;width:41.6px;height:23.8px;background:#79fcc3"></div>
<div class="t" style="top:381px;font-size:6.60px;color:#404040;left:761.72px;width:40px;text-align:center;">10</div>
<div class="t" style="top:422px;font-size:6.70px;color:#595959;-webkit-text-stroke:0.12px #595959;left:731.72px;width:100px;text-align:center;transform:scaleX(0.990);">Entrevista Inicial até</div>
<div class="t" style="top:431px;font-size:6.70px;color:#595959;-webkit-text-stroke:0.12px #595959;left:731.72px;width:100px;text-align:center;transform:scaleX(0.990);">Entrevista com gerentes</div>
<div class="a" style="left:844.1px;top:390.8px;width:41.6px;height:23.8px;background:#79fcc3"></div>
<div class="t" style="top:381px;font-size:6.60px;color:#404040;left:844.88px;width:40px;text-align:center;">10</div>
<div class="t" style="top:422px;font-size:6.70px;color:#595959;-webkit-text-stroke:0.12px #595959;left:814.88px;width:100px;text-align:center;transform:scaleX(0.990);">Entrevista com gerentes</div>
<div class="t" style="top:431px;font-size:6.70px;color:#595959;-webkit-text-stroke:0.12px #595959;left:814.88px;width:100px;text-align:center;transform:scaleX(0.990);">até Entrevista Final</div>
<div class="a" style="left:927.2px;top:390.8px;width:41.6px;height:23.8px;background:#79fcc3"></div>
<div class="t" style="top:381px;font-size:6.60px;color:#404040;left:928.04px;width:40px;text-align:center;">10</div>
<div class="t" style="top:422px;font-size:6.70px;color:#595959;-webkit-text-stroke:0.12px #595959;left:898.04px;width:100px;text-align:center;transform:scaleX(0.990);">Entrevista Final até o fim</div>
<div class="t" style="top:431px;font-size:6.70px;color:#595959;-webkit-text-stroke:0.12px #595959;left:898.04px;width:100px;text-align:center;transform:scaleX(0.990);">do processo</div>
<!-- LOGO -->
<svg class="a" style="left:0;top:125px;z-index:3" width="110" height="85" viewBox="0 125 110 85">
 <!-- left paper -->
 <path d="M18.6 142.6L38 139.5L43 176L26.8 179Z" fill="#e3e7ee" stroke="#000" stroke-width="1.7" stroke-linejoin="round"/>
 <circle cx="32.5" cy="149.5" r="3.9" fill="#f7c95c" stroke="#000" stroke-width="1.4"/>
 <path d="M26 160.5C26 155.5 29 153.8 33 153.8C36 153.8 38 155 38.5 157L39 161Z" fill="#f7c95c" stroke="#000" stroke-width="1.4"/>
 <path d="M30.5 166L38 165L39.5 177.5L32 178.5Z" fill="#a3d977" stroke="#000" stroke-width="1.2"/>
 <!-- right paper -->
 <path d="M69 137.5L88.6 143L80.2 174.6L63 170Z" fill="#e3e7ee" stroke="#000" stroke-width="1.7" stroke-linejoin="round"/>
 <path d="M75 143.8L84 146.3M74 147.6L83 150.1M73 151.4L82 153.9M72 155.2L81 157.7M71 159L80 161.5M70 162.8L79 165.3" stroke="#000" stroke-width="1.4"/>
 <!-- center paper -->
 <rect x="36.2" y="132.2" width="35.3" height="47.3" fill="#fce6a4" stroke="#000" stroke-width="1.8"/>
 <circle cx="48.1" cy="141.3" r="4.3" fill="#f7c95c" stroke="#000" stroke-width="1.5"/>
 <path d="M40.2 155.6C40.2 149.6 43.6 146.8 48.1 146.8C52.6 146.8 56 149.6 56 155.6Z" fill="#f7c95c" stroke="#000" stroke-width="1.5"/>
 <path d="M60.5 135.8H67.3M60.5 139.4H67.3M60.5 143H67.3M60.5 146.6H67.3M60.5 150.2H67.3M60.5 153.8H67.3" stroke="#000" stroke-width="1.6"/>
 <rect x="41.6" y="160.2" width="23.8" height="14.2" fill="#a3d977" stroke="#000" stroke-width="1.6"/>
 <!-- handle -->
 <rect x="39.5" y="182.6" width="9.5" height="3.8" fill="#c9d2da" stroke="#000" stroke-width="1"/>
 <path d="M23.5 179.9H40.2V189.3H23.5A4.7 4.7 0 0 1 23.5 179.9Z" fill="#c98a5c" stroke="#000" stroke-width="1.8"/>
 <!-- lens -->
 <circle cx="64.2" cy="185" r="17.1" fill="#000"/>
 <circle cx="64.2" cy="185" r="15.5" fill="#fff"/>
 <circle cx="64.2" cy="185" r="13.4" fill="#000"/>
 <circle cx="64.2" cy="185" r="11.5" fill="#5ccbef"/>
 <path d="M64.6 176.6A8.5 8.5 0 0 1 69.3 191.5" stroke="#000" stroke-width="1.5" fill="none"/>
 <circle cx="65.2" cy="192.2" r=".9" fill="#000"/>
</svg>
<div class="a" style="left:0;top:166.5px;width:108px;height:1px;background:#a8a8a8;opacity:.8;z-index:4"></div>
<div class="a" style="left:17px;top:365px;width:91.7px;height:32.5px;background:#79fcc3"></div>
<div class="t" style="top:224px;font-size:8.38px;color:#fff;font-weight:bold;-webkit-text-stroke:0.2px #fff;left:22.50px;transform:scaleX(0.851);transform-origin:0 0;">CADASTROS</div>
<div class="t" style="top:259px;font-size:8.38px;color:#fff;font-weight:bold;-webkit-text-stroke:0.2px #fff;left:22.50px;transform:scaleX(0.821);transform-origin:0 0;">PROCESSOS</div>
<div class="t" style="top:270px;font-size:8.38px;color:#fff;font-weight:bold;-webkit-text-stroke:0.2px #fff;left:22.50px;transform:scaleX(0.828);transform-origin:0 0;">SELETIVOS</div>
<div class="t" style="top:297px;font-size:8.38px;color:#fff;font-weight:bold;-webkit-text-stroke:0.2px #fff;left:22.50px;transform:scaleX(0.860);transform-origin:0 0;">CONTROLE DE</div>
<div class="t" style="top:308px;font-size:8.38px;color:#fff;font-weight:bold;-webkit-text-stroke:0.2px #fff;left:22.50px;transform:scaleX(0.905);transform-origin:0 0;">CANDIDATOS</div>
<div class="t" style="top:341px;font-size:8.38px;color:#fff;font-weight:bold;-webkit-text-stroke:0.2px #fff;left:22.50px;transform:scaleX(0.855);transform-origin:0 0;">RELATÓRIOS</div>
<div class="t" style="top:379px;font-size:8.38px;color:#111;font-weight:bold;-webkit-text-stroke:0.2px #111;left:22.50px;transform:scaleX(0.873);transform-origin:0 0;">DASHBOARDS</div>
<div class="t" style="top:415px;font-size:8.38px;color:#fff;font-weight:bold;-webkit-text-stroke:0.2px #fff;left:22.50px;transform:scaleX(0.856);transform-origin:0 0;">INSTRUÇÕES</div>
<div class="a" style="left:1007px;top:117px;width:15px;height:415px;background:#f2f2f2"></div>
<div class="a" style="left:1011.8px;top:129px;width:6.2px;height:72px;background:#878787;border-radius:3.1px"></div>
<svg class="a" style="left:1008px;top:117px" width="14" height="415"><path d="M4 9.3L7.5 4.5L11 9.3Z" fill="#606060"/><path d="M4 409L7.5 413.5L11 409Z" fill="#606060"/></svg>
<div class="a" style="left:1022px;top:0;width:2px;height:532px;background:#202020"></div>
</body></html>
